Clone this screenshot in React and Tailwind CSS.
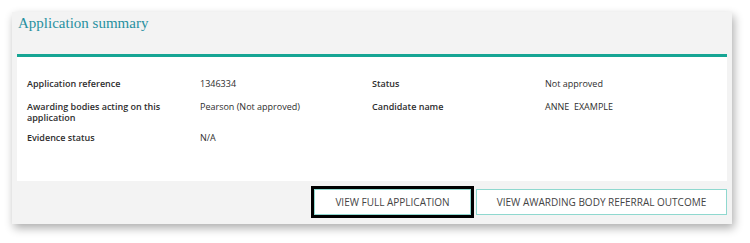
export default function App() {
  const rows = [
    ["Application reference", "1346334", "Status", "Not approved"],
    ["Awarding bodies acting on this application", "Pearson (Not approved)", "Candidate name", "ANNE\u00a0 EXAMPLE"],
    ["Evidence status", "N/A", "", ""],
  ];

  return (
    <div className="w-[750px] h-[243px] bg-white pt-[12px] pl-[12px] font-['Open_Sans',sans-serif]">
      <div className="w-[720px] h-[212px] bg-[#f3f3f3] shadow-[2px_4px_9px_rgba(0,0,0,0.33)] flex flex-col">
        {/* header */}
        <div className="h-[42px] px-[6px] pt-[2px]">
          <h2 className="font-['Liberation_Serif',serif] text-[15px] leading-[18px] text-[#2790a0]">
            Application summary
          </h2>
        </div>

        {/* summary body */}
        <div className="mx-[5px] h-[127px] bg-white border-t-[3px] border-[#16a594] pt-[21px] pl-[10px]">
          {rows.map((r, i) => (
            <div
              key={i}
              className={
                "grid grid-cols-[173px_172px_173px_1fr] text-[9px] leading-[11.5px] text-[#2e2e2e] " +
                (i === 1 ? "mt-[11px]" : i === 2 ? "mt-[8px]" : "")
              }
            >
              <div className="font-semibold pr-[30px]">{r[0]}</div>
              <div>{r[1]}</div>
              <div className="font-semibold">{r[2]}</div>
              <div>{r[3]}</div>
            </div>
          ))}
        </div>

        {/* actions */}
        <div className="flex justify-end gap-[5px] px-[5px] pt-[8px]">
          <button
            type="button"
            className="w-[157px] h-[26px] bg-white border border-[#8fd8cf] outline-[3px] outline-solid outline-black text-[10px] text-[#444] uppercase"
          >
            View full application
          </button>
          <button
            type="button"
            className="w-[251px] h-[26px] bg-white border border-[#8fd8cf] text-[10px] text-[#444] uppercase"
          >
            View awarding body referral outcome
          </button>
        </div>
      </div>
    </div>
  );
}
